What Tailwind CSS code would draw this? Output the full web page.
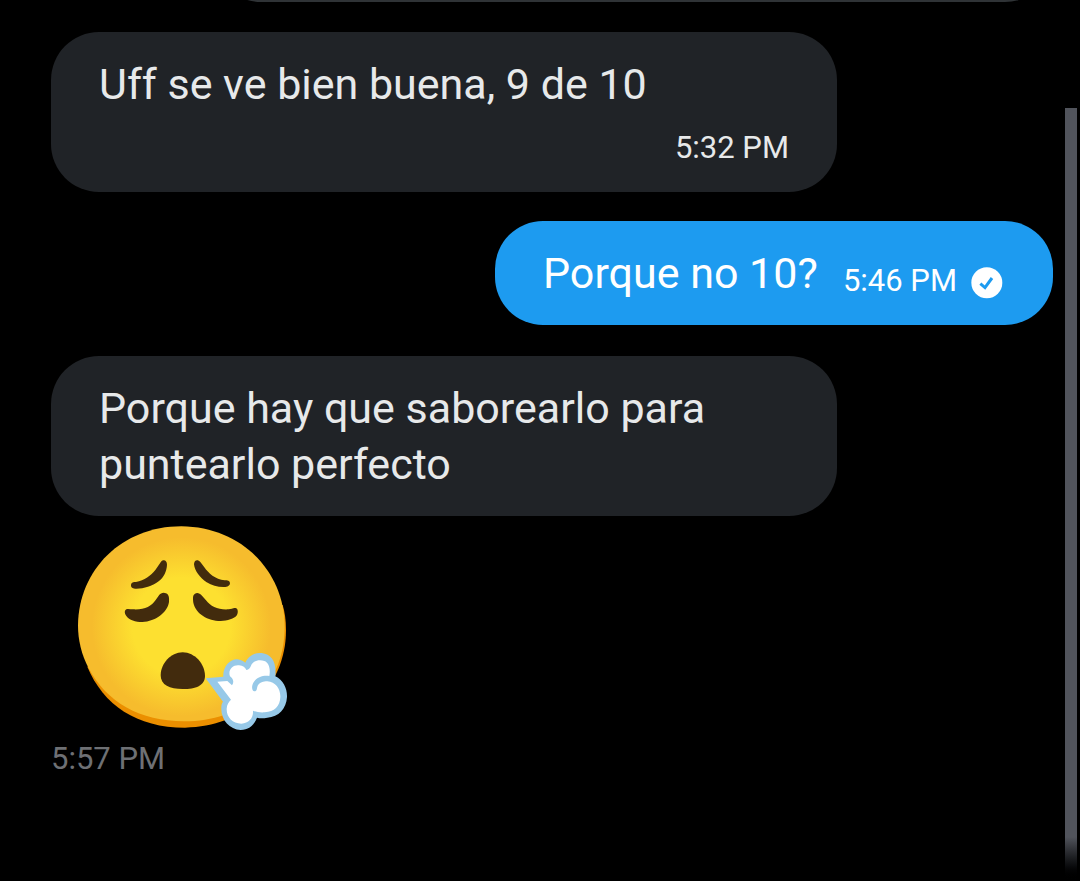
<!DOCTYPE html>
<html lang="es">
<head>
<meta charset="utf-8">
<meta name="viewport" content="width=device-width, initial-scale=1">
<title>Mensajes</title>
<script src="https://cdn.jsdelivr.net/npm/@tailwindcss/browser@4"></script>
</head>
<body class="bg-black">
<div class="flex min-h-screen gap-3 overflow-hidden bg-black pr-[3px] font-['Roboto','Noto_Sans',sans-serif] text-[43px] leading-14 text-[#e7e9ea]">
  <main class="flex flex-1 flex-col items-start pl-[51px]">
    <!-- Tail end of the previous message -->
    <div class="-mt-[94px] h-24 w-[840px] self-end rounded-[48px] bg-[#2f3336]"></div>

    <article class="mt-[30px] flex w-[786px] flex-col rounded-[48px] bg-[#202327] px-12 py-6">
      <p>Uff se ve bien buena, 9 de 10</p>
      <time class="mt-4 self-end text-[31px] leading-10">5:32 PM</time>
    </article>

    <article class="mt-[29px] flex w-[558px] items-end self-end rounded-[48px] bg-[#1d9bf0] px-12 py-6 text-white">
      <p>Porque no 10?</p>
      <time class="ml-auto text-[31px] leading-10">5:46 PM</time>
      <svg class="mr-0.5 mb-0.5 ml-3.5 size-8" viewBox="-1 -1 96 96" role="img" aria-label="Enviado">
        <circle cx="46.500" cy="46.500" r="46.500" fill="#fff"/>
        <path d="M27 49l14 12 21-29" fill="none" stroke="#1d9bf0" stroke-width="9"/>
      </svg>
    </article>

    <article class="mt-[31px] w-[786px] rounded-[48px] bg-[#202327] px-12 py-6">
      <p>Porque hay que saborearlo para puntearlo perfecto</p>
    </article>

    <svg class="mt-2.5 ml-[27px] h-[205px] w-[210px]" viewBox="54 33 630 615" role="img" aria-label="Cara exhalando">
      <defs>
        <radialGradient id="face" gradientUnits="userSpaceOnUse" cx="364" cy="335" r="305">
          <stop offset="0.480" stop-color="#fde030"/>
          <stop offset="0.880" stop-color="#f6bc2d"/>
        </radialGradient>
      </defs>
      <path d="M82 455C130 570 230 638 375 638C560 636 678 505 678 345C678 315 674 290 668 270L600 270Z" fill="#eb8f00"/>
      <path d="M364 34C550 36 674 175 674 335C674 515 545 619 372 619C240 619 140 562 86 460C64 418 54 375 54 330C56 165 185 34 364 34Z" fill="url(#face)"/>
      <g fill="#422b0d">
        <path d="M303 140C311 131 321 136 321 149C320 169 312 186 296 199C275 215 249 222 225 221C216 220 212 215 213 209C214 202 220 201 228 201C253 196 273 182 286 165Z"/>
        <path d="M421 141C413 131 402 135 402 148C404 168 420 188 440 202C456 212 475 217 496 216C506 215 510 210 510 204C509 197 503 196 494 196C466 194 445 174 433 157Z"/>
        <path d="M296 242C303 233 311 232 318 235C327 239 328 249 327 261C322 293 287 319 247 321C226 321 208 315 199 303C192 294 194 286 199 283C204 280 211 283 219 283C253 285 274 274 287 255Z"/>
        <path d="M426 242C419 234 411 232 405 236C397 241 399 252 400 263C407 296 444 318 482 318C502 317 523 312 531 300C535 292 534 283 529 280C522 276 515 282 506 283C475 285 452 275 438 256Z"/>
        <path d="M368 412C405 413 434 446 435 482C435 512 407 522 368 522C329 522 302 511 302 480C303 445 332 413 368 412Z"/>
      </g>
      <path d="M437 490L490 485C488 455 510 432 532 433C542 434 550 438 556 443C564 423 584 412 605 414C635 418 650 440 646 484C670 496 682 521 681 546C679 581 656 606 622 608C610 610 600 610 591 608C582 632 565 645 542 645C508 642 482 614 484 577C484 569 486 564 489 560Z" fill="#97c9e8"/>
      <path d="M472 500L502 498L516 511C523 502 520 491 510 484C503 465 518 449 537 451C549 452 556 458 559 465C569 464 571 456 575 448C583 436 599 433 613 438C627 443 632 462 628 483C610 480 589 487 580 503C573 517 577 529 583 529C592 529 590 519 593 512C599 502 610 499 622 499C647 500 662 523 661 546C660 574 643 590 614 592C600 593 588 591 579 587C581 608 567 625 544 626C517 626 499 606 500 581C501 568 506 560 513 554Z" fill="#fff"/>
    </svg>

    <time class="mt-2 text-[31px] leading-10 text-[#6e7074]">5:57 PM</time>
  </main>
  <!-- Scroll position indicator, fading out at the bottom edge -->
  <div class="mt-27 flex w-3 flex-col" aria-hidden="true">
    <div class="flex-1 bg-[#51545c]"></div>
    <div class="h-11 bg-linear-to-b from-[#51545c] to-black"></div>
  </div>
</div>
</body>
</html>
